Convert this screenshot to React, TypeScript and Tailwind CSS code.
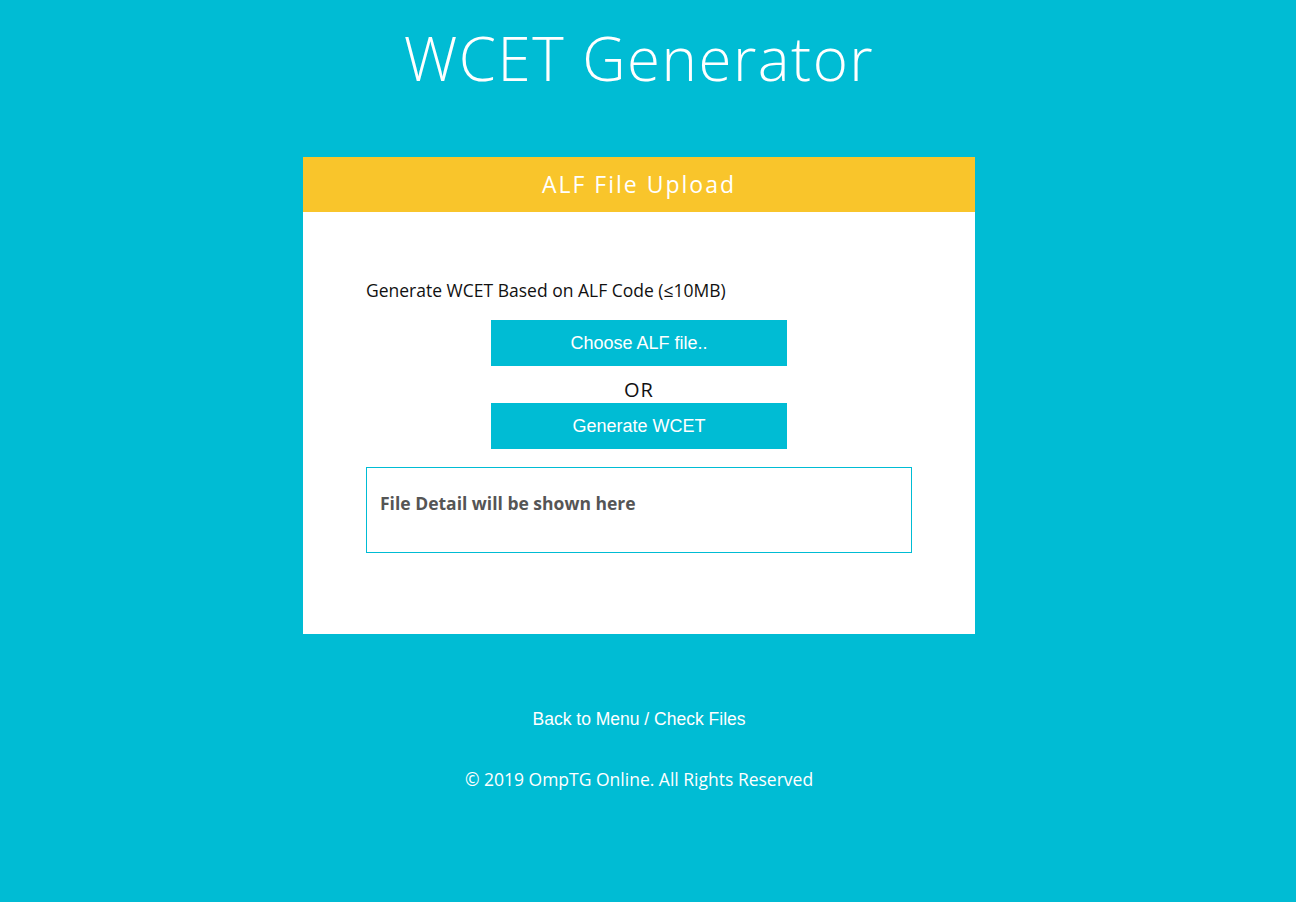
export default function App() {
  return (
    <div className="min-h-[902px] w-full bg-[#00bcd4] pr-[18px] flex flex-col items-center font-['Open_Sans',sans-serif]">
      <h1 className="mt-[18px] h-[80px] text-[60px] leading-[80px] font-light text-white tracking-[1.5px] font-['Open_Sans',sans-serif]">
        WCET Generator
      </h1>

      <div className="mt-[59px] w-[672px] bg-white">
        <div className="h-[55px] bg-[#f9c52b] flex items-center justify-center">
          <span className="text-[23px] text-white tracking-[2px]">ALF File Upload</span>
        </div>
        <div className="px-[63px] pt-[66px] pb-[81px]">
          <p className="text-[17.5px] leading-[24px] text-[#111]">Generate WCET Based on ALF Code (≤10MB)</p>
          <div className="mt-[18px] flex flex-col items-center">
            <button className="w-[296px] h-[46px] bg-[#00bcd4] text-white text-[18px] font-['Liberation_Sans',sans-serif]">
              Choose ALF file..
            </button>
            <div className="h-[37px] pt-[10px] flex items-center text-[20px] tracking-[1px] text-[#111]">OR</div>
            <button className="w-[296px] h-[46px] bg-[#00bcd4] text-white text-[18px] font-['Liberation_Sans',sans-serif]">
              Generate WCET
            </button>
          </div>
          <div className="mt-[18px] h-[86px] border border-[#00bcd4] px-[13px] pt-[22px]">
            <p className="text-[17.5px] leading-[26px] font-bold text-[#555]">File Detail will be shown here</p>
          </div>
        </div>
      </div>

      <a className="mt-[72px] text-[17.5px] text-white font-['Liberation_Sans',sans-serif]">
        Back to Menu / Check Files
      </a>
      <p className="mt-[34px] text-[17.5px] text-white">© 2019 OmpTG Online. All Rights Reserved</p>
    </div>
  );
}
